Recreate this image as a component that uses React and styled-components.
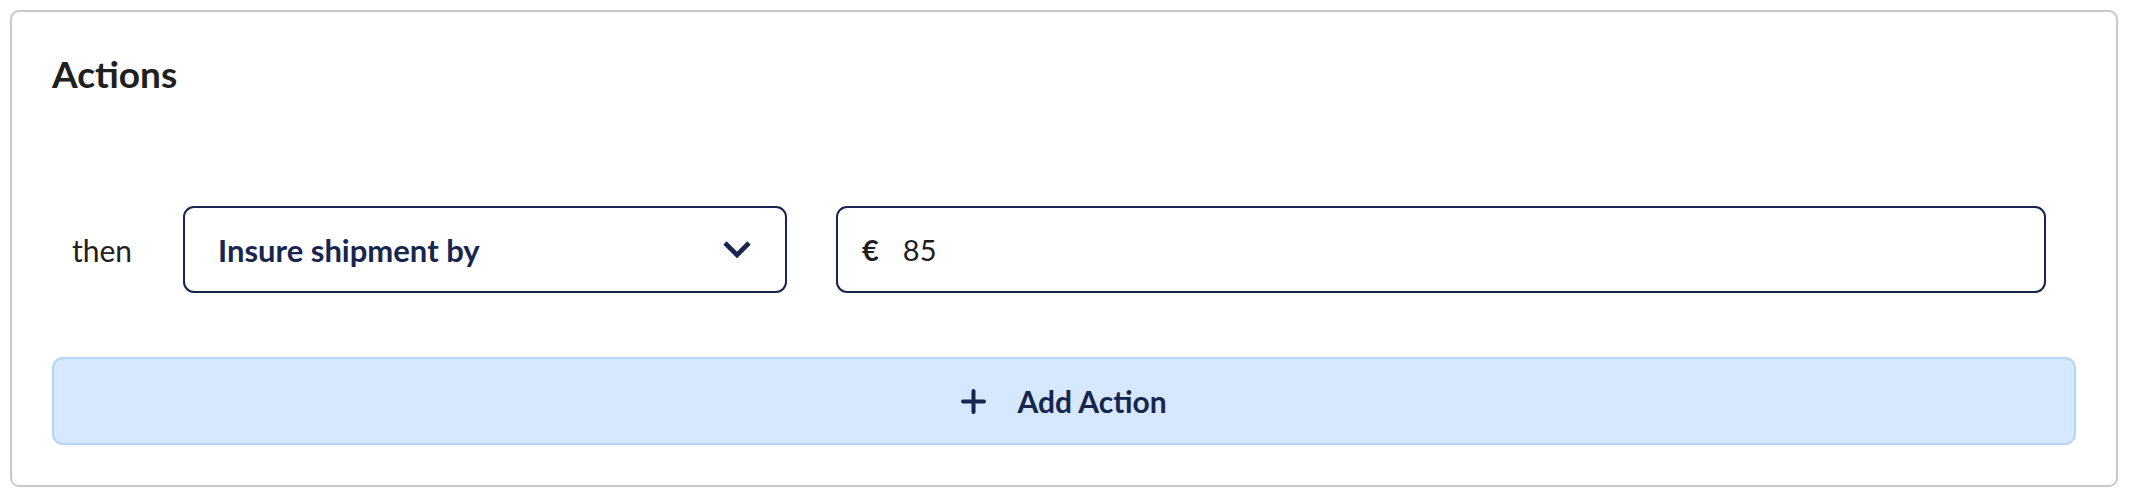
import React from "react";
import styled, { createGlobalStyle } from "styled-components";

const GlobalStyle = createGlobalStyle`
  html, body {
    margin: 0;
    padding: 0;
    background: #ffffff;
    font-family: Lato, "Open Sans", sans-serif;
  }
  * { box-sizing: border-box; }
`;

const Page = styled.div`
  padding: 10px 12px 8px 10px;
`;

const Card = styled.section`
  border: 2px solid #c8c8c8;
  border-radius: 9px;
  padding: 40px 40px 40px 40px;
  background: #fff;
`;

const Title = styled.h2`
  margin: 0;
  font-size: 37px;
  line-height: 43px;
  font-weight: 700;
  color: #202020;
`;

const Rows = styled.div`
  margin-top: 111px;
  display: flex;
  flex-direction: column;
  gap: 64px;
`;

const Row = styled.div`
  display: flex;
  align-items: center;
  padding-right: 30px;
`;

const Label = styled.span`
  flex: 0 0 131px;
  padding-left: 20px;
  font-size: 30px;
  color: #202020;
`;

const Field = styled.div`
  height: 87px;
  border: 2px solid #17254f;
  border-radius: 11px;
  display: flex;
  align-items: center;
  background: #fff;
`;

const Select = styled(Field)`
  flex: 0 0 604px;
  padding: 0 33px 0 33px;
  justify-content: space-between;
  color: #17254f;
  font-size: 31px;
  font-weight: 700;
`;

const Input = styled(Field)`
  flex: 1;
  margin-left: 49px;
  padding: 0 24px;
  gap: 24px;
  font-size: 29px;
  color: #1e1e1e;
`;

const Currency = styled.span`
  font-weight: 700;
`;

const AddButton = styled.button`
  height: 88px;
  width: 100%;
  border: 2px solid #b3d5f8;
  border-radius: 11px;
  background: #d6e8fd;
  display: flex;
  align-items: center;
  justify-content: center;
  gap: 31px;
  font-family: inherit;
  font-size: 30px;
  font-weight: 700;
  color: #17254f;
  cursor: pointer;
`;

const Chevron = () => (
  <svg width="30" height="19" viewBox="0 0 30 19" fill="none">
    <polyline points="3,3 15,15 27,3" stroke="#17254f" strokeWidth="4.6" strokeLinejoin="miter" />
  </svg>
);

const Plus = () => (
  <svg width="25" height="25" viewBox="0 0 25 25" fill="none">
    <path d="M12.5 2 V23 M2 12.5 H23" stroke="#17254f" strokeWidth="4" strokeLinecap="round" />
  </svg>
);

export default function App() {
  return (
    <>
      <GlobalStyle />
      <Page>
        <Card>
          <Title>Actions</Title>
          <Rows>
            <Row>
              <Label>then</Label>
              <Select>
                <span>Insure shipment by</span>
                <Chevron />
              </Select>
              <Input>
                <Currency>€</Currency>
                <span>85</span>
              </Input>
            </Row>
            <AddButton>
              <Plus />
              <span>Add Action</span>
            </AddButton>
          </Rows>
        </Card>
      </Page>
    </>
  );
}
